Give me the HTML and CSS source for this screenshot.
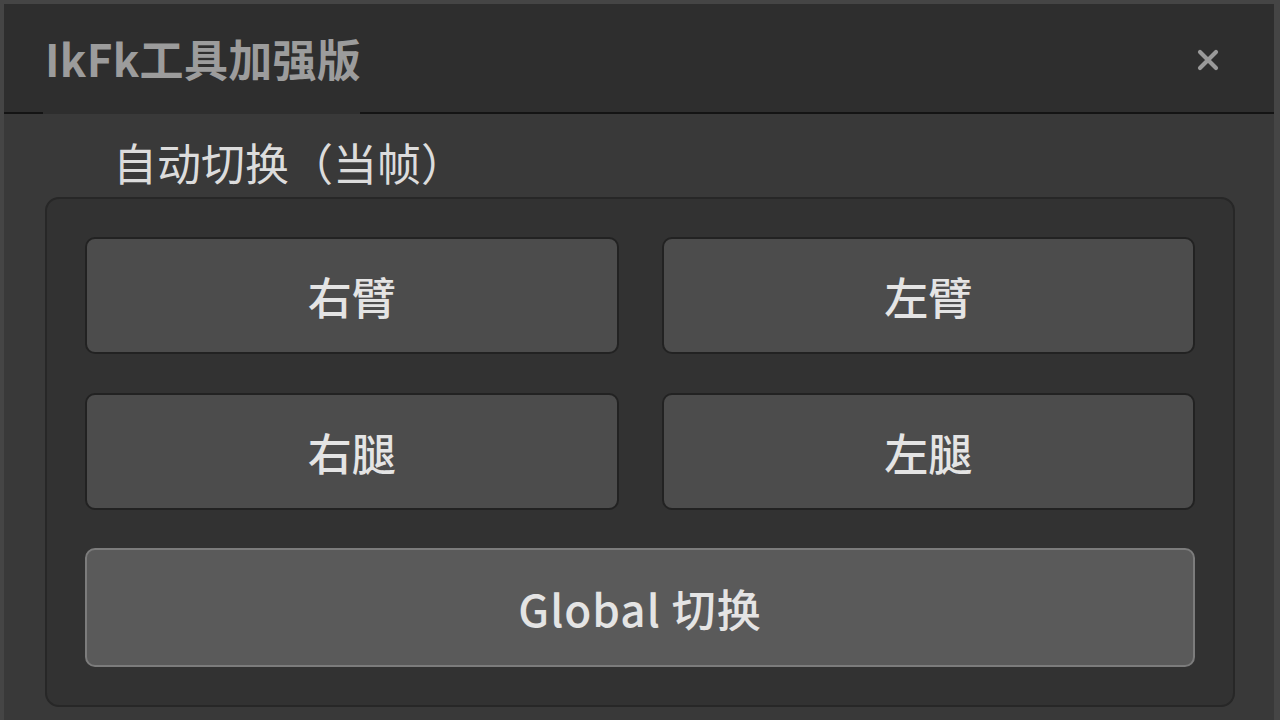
FILE: index.html
```html
<!DOCTYPE html>
<html lang="zh">
<head>
<meta charset="utf-8">
<title>IkFk工具加强版</title>
<link rel="stylesheet" href="styles.css">
</head>
<body>
<div class="window">
  <header class="titlebar">
    <div class="title-row">
      <h1 class="title">IkFk工具加强版</h1>
      <button class="close" aria-label="关闭">
        <svg width="22" height="22" viewBox="0 0 22 22"><path d="M3 3 L19 19 M19 3 L3 19" stroke="#9a9a9a" stroke-width="4.2" stroke-linecap="round"/></svg>
      </button>
    </div>
    <div class="tabline">
      <span class="line line-left"></span>
      <span class="tab-gap"></span>
      <span class="line line-right"></span>
    </div>
  </header>
  <main class="content">
    <div class="group-label">自动切换（当帧）</div>
    <section class="group">
      <div class="grid">
        <button class="btn">右臂</button>
        <button class="btn">左臂</button>
        <button class="btn">右腿</button>
        <button class="btn">左腿</button>
      </div>
      <button class="btn btn-global">Global 切换</button>
    </section>
  </main>
</div>
</body>
</html>
```
FILE: styles.css
```css
html, body {
  margin: 0;
  padding: 0;
  height: 100%;
  overflow: hidden;
}
body {
  background: #454545;
  font-family: "Noto Sans CJK SC", "Noto Sans", sans-serif;
}
.window {
  margin: 4px 6px 0 4px;
  height: 716px;
  display: flex;
  flex-direction: column;
  background: #393939;
}
.titlebar {
  background: #2e2e2e;
}
.title-row {
  height: 108px;
  display: flex;
  align-items: center;
  justify-content: space-between;
  padding: 0 55px 0 41px;
}
.title {
  margin: 0;
  font-size: 44px;
  font-weight: 700;
  color: #9c9c9c;
  line-height: 1;
  letter-spacing: 0.3px;
}
.close {
  background: none;
  border: 0;
  padding: 0;
  width: 22px;
  height: 22px;
  display: flex;
  margin-top: 4px;
}
.tabline {
  display: flex;
  height: 2px;
}
.line {
  background: #141414;
}
.line-left { width: 39px; }
.tab-gap { width: 317px; background: #2e2e2e; }
.line-right { flex: 1; }
.content {
  flex: 1;
  padding: 22px 39px 0 41px;
}
.group-label {
  font-size: 44px;
  line-height: 52px;
  color: #dcdcdc;
  padding-left: 68px;
  margin-bottom: 9px;
}
.group {
  background: #323232;
  border: 2px solid #272727;
  border-radius: 14px;
  padding: 38px 38px 38px;
  display: flex;
  flex-direction: column;
  gap: 38px;
}
.grid {
  display: grid;
  grid-template-columns: 1fr 1fr;
  column-gap: 43px;
  row-gap: 39px;
}
.btn {
  font-family: "Noto Sans CJK SC", "Noto Sans", sans-serif;
  font-size: 44px;
  font-weight: 500;
  color: #e4e4e4;
  background: #4c4c4c;
  border: 2px solid #222;
  border-radius: 10px;
  height: 117px;
  padding: 0;
}
.btn-global {
  background: #5a5a5a;
  border: 2px solid #7c7c7c;
  height: 119px;
  letter-spacing: 1px;
}
```
